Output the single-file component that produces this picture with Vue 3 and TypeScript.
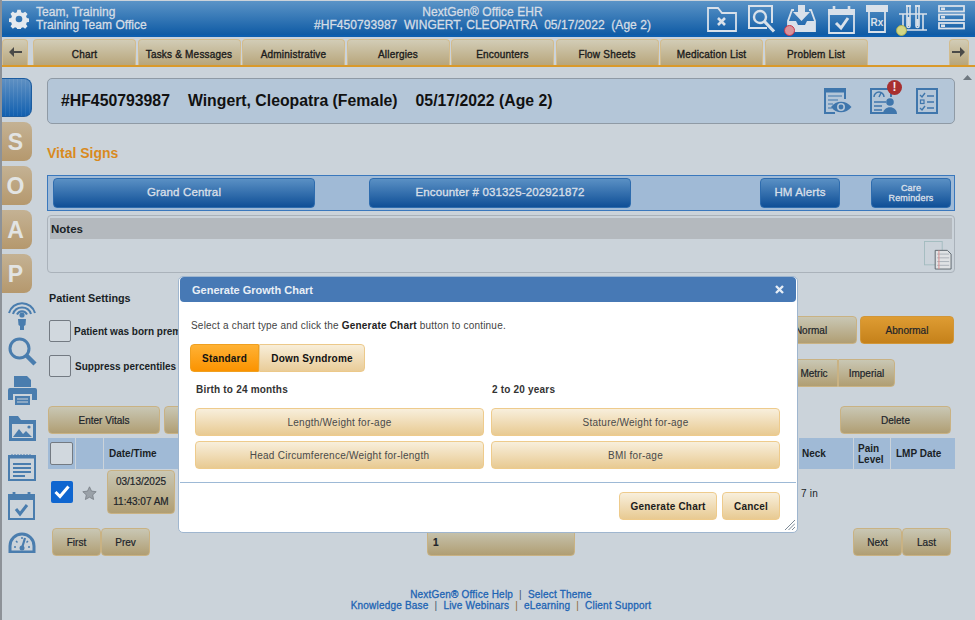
<script setup lang="ts">
const tabs = ['Chart', 'Tasks & Messages', 'Administrative', 'Allergies', 'Encounters', 'Flow Sheets', 'Medication List', 'Problem List']
const soap = ['S', 'O', 'A', 'P']
</script>

<template>
  <div class="page">
    <header class="topbar">
      <div class="who">
        <svg class="gear" width="20" height="20" viewBox="0 0 24 24"><path fill="#e4e9ee" fill-rule="evenodd" d="M10 1h4l.6 3 2.2.9 2.6-1.7 2.8 2.8-1.7 2.6.9 2.2 3 .6v4l-3 .6-.9 2.2 1.7 2.6-2.8 2.8-2.6-1.7-2.2.9-.6 3h-4l-.6-3-2.2-.9-2.6 1.7-2.8-2.8 1.7-2.6-.9-2.2-3-.6v-4l3-.6.9-2.2L1.800 5.800 4.600 3l2.600 1.700L9.400 3.800zM12 8a4 4 0 1 0 0 8 4 4 0 0 0 0-8z"/></svg>
        <div>
          <div>Team, Training</div>
          <div>Training Team Office</div>
        </div>
      </div>
      <div class="ehr">
        <div class="ehr-name">NextGen® Office EHR</div>
        <div class="ehr-patient"><span>#HF450793987</span><span>WINGERT, CLEOPATRA</span><span>05/17/2022</span><span>(Age 2)</span></div>
      </div>
      <div class="top-icons">
        <svg width="30" height="27" viewBox="0 0 30 27" fill="none" stroke="#d9e1ea" stroke-width="1.800"><path d="M1 3h10l4 5h14v18H1z"/><path d="M11 13l7 7m0-7l-7 7" stroke-width="2.600"/></svg>
        <svg width="28" height="28" viewBox="0 0 28 28" fill="none" stroke="#d9e1ea" stroke-width="2"><path d="M19 23H1V1h23v17"/><circle cx="12" cy="12" r="6" stroke-width="2.400"/><path d="M16.500 16.500L26 26.500" stroke-width="3.200"/></svg>
        <span class="icon-wrap">
          <svg width="29" height="27" viewBox="0 0 29 27"><path fill="#d9e1ea" d="M11 0h7v7h5l-8.500 9L6 7h5z"/><path fill="none" stroke="#d9e1ea" stroke-width="1.800" d="M7 5H5L1 16v10h27V16L24 5h-2"/><path fill="#d9e1ea" d="M1 16h8l2 4h7l2-4h8v10H1z"/></svg>
          <i class="dot dot-red"></i>
        </span>
        <svg width="27" height="29" viewBox="0 0 27 29" fill="none" stroke="#d9e1ea" stroke-width="1.800"><path d="M1 5h25v23H1z"/><path fill="#d9e1ea" d="M1 5h25v4H1z"/><path d="M6 1v6m15-6v6" stroke-width="2.600"/><path d="M8 18l5 5 7-10" stroke-width="3"/></svg>
        <svg width="22" height="28" viewBox="0 0 22 28" fill="none" stroke="#d9e1ea" stroke-width="1.800"><path fill="#d9e1ea" d="M0 1h22v5H0z"/><path d="M3 6h16v21H3z"/><text x="11" y="21" text-anchor="middle" font-size="10" font-weight="700" font-family="Liberation Sans" fill="#d9e1ea" stroke="none">Rx</text></svg>
        <span class="icon-wrap">
          <svg width="28" height="28" viewBox="0 0 28 28" fill="none" stroke="#d9e1ea" stroke-width="1.600"><path d="M0 9h28M0 25h28M4 9v16M24 9v16"/><path d="M7 1h5M16 1h5" stroke-width="2"/><path d="M8 1v20a1.500 1.500 0 0 0 3 0V1M17 1v20a1.500 1.500 0 0 0 3 0V1"/><path d="M9.500 12v9M18.500 14v7" stroke-width="2.400"/></svg>
          <i class="dot dot-yellow"></i>
        </span>
        <svg width="27" height="25" viewBox="0 0 27 25" fill="none" stroke="#d9e1ea" stroke-width="1.800"><rect x="1" y="1" width="25" height="5.500"/><rect x="1" y="9.500" width="25" height="5.500"/><rect x="1" y="18" width="25" height="5.500"/><path d="M3 3.800h4M3 12.300h4M3 20.800h4" stroke-width="2.400"/></svg>
      </div>
    </header>

    <nav class="tabbar">
      <button class="tab tab-arrow">
        <svg width="13" height="10" viewBox="0 0 13 10"><path fill="#4a4a48" d="M5 0v4h8v2H5v4L0 5z"/></svg>
      </button>
      <div class="tabs">
        <button v-for="t in tabs" :key="t" class="tab">{{ t }}</button>
      </div>
      <button class="tab tab-arrow tab-next">
        <svg width="13" height="10" viewBox="0 0 13 10"><path fill="#4a4a48" d="M8 0v4H0v2h8v4l5-5z"/></svg>
      </button>
    </nav>

    <div class="body">
      <aside class="side">
        <div class="side-blue"></div>
        <div v-for="s in soap" :key="s" class="side-tab">{{ s }}</div>
        <div class="side-icons">
          <svg width="28" height="30" viewBox="0 0 28 30" fill="none" stroke="#4a7dae" stroke-width="2"><path d="M1 13a13.500 13.500 0 0 1 26 0M5 14a9.500 9.500 0 0 1 18 0M9 14.500a5.500 5.500 0 0 1 10 0"/><circle cx="14" cy="15" r="2.600" fill="#4a7dae" stroke="none"/><path fill="#4a7dae" stroke="none" d="M10 19h8l-.5 6-1.500 1v4h-4v-4l-1.500-1z"/></svg>
          <svg class="ic-search" width="29" height="29" viewBox="0 0 29 29" fill="none" stroke="#4a7dae"><circle cx="11.500" cy="11.500" r="9.500" stroke-width="3"/><path d="M18.500 18.500L27 27" stroke-width="4.500"/></svg>
          <svg class="ic-print" width="29" height="29" viewBox="0 0 29 29"><path fill="#4a7dae" d="M6 0h13l4 4v7H6z"/><path fill="#4a7dae" d="M2 12h25a2 2 0 0 1 2 2v10h-5v-6H5v6H0V14a2 2 0 0 1 2-2z"/><path fill="#4a7dae" d="M7 20h15v9H7z"/><path stroke="#cbd3da" stroke-width="1.200" d="M9 23h11M9 26h11"/></svg>
          <svg class="ic-folder" width="28" height="25" viewBox="0 0 28 25"><path fill="#4a7dae" d="M1 0h9l3 4h15v21H1z"/><path fill="#cbd3da" d="M4 8h21v14H4z"/><path fill="#4a7dae" d="M5 21l6-8 4 5 3-3 6 6z"/><circle cx="21" cy="11" r="1.600" fill="#4a7dae"/></svg>
          <svg class="ic-note" width="28" height="28" viewBox="0 0 28 28" fill="none" stroke="#4a7dae"><rect x="1" y="3" width="26" height="24" stroke-width="2"/><path d="M2 4h24" stroke-width="3"/><path d="M4 1v3m3-3v3m3-3v3m3-3v3m3-3v3m3-3v3m3-3v3" stroke-width="1"/><path d="M5 11h18M5 15h18M5 19h18M5 23h12" stroke-width="2"/></svg>
          <svg class="ic-cal" width="27" height="29" viewBox="0 0 27 29" fill="none" stroke="#4a7dae" stroke-width="2"><rect x="1" y="4" width="25" height="24"/><path fill="#4a7dae" d="M1 4h25v4H1z"/><path d="M6 1v6m15-6v6" stroke-width="2.800"/><path d="M8 18l4 5 7-9" stroke-width="3"/></svg>
          <svg class="ic-gauge" width="28" height="21" viewBox="0 0 28 21"><path fill="none" stroke="#4a7dae" stroke-width="3" d="M2 20v-6a12 12 0 0 1 24 0v6z"/><path stroke="#4a7dae" stroke-width="2.200" d="M14 16l3-10"/><circle cx="14" cy="16" r="2.500" fill="#4a7dae"/><path stroke="#4a7dae" stroke-width="1.500" d="M6 15h2M8 9l1.500 1.500M14 5v2M20 9l-1.500 1.500M20 15h2"/></svg>
        </div>
      </aside>

      <main class="main">
        <section class="banner">
          <div class="banner-text"><span>#HF450793987</span><span>Wingert, Cleopatra (Female)</span><span>05/17/2022 (Age 2)</span></div>
          <div class="banner-icons">
            <svg width="28" height="27" viewBox="0 0 28 27" fill="none" stroke="#3f76ac"><path stroke-width="2" d="M11 25H1V1h20v10"/><path fill="#3f76ac" d="M1 1h20v3H1z"/><path stroke-width="1.200" d="M4 8h14M4 12h10M4 16h5M4 20h4"/><path fill="#3f76ac" stroke="none" d="M7 19c5-7 15-7 20.500 0-5.500 7-15.500 7-20.500 0z"/><circle cx="17" cy="19" r="4" fill="#b4c6d8" stroke="none"/><circle cx="17" cy="19" r="2.400" fill="#3f76ac" stroke="none"/></svg>
            <span class="alert-wrap">
              <svg width="28" height="27" viewBox="0 0 28 27" fill="none" stroke="#3f76ac"><path stroke-width="2" d="M14 25H1V1h20v8"/><path stroke-width="1.500" d="M4 9a5 5 0 0 1 10 0M9 9l2-4M4 14h12M4 18h8M4 22h8"/><circle cx="20" cy="14" r="3.800" fill="#3f76ac" stroke="none"/><path fill="#3f76ac" stroke="none" d="M13 26c0-9 14-9 14 0z"/></svg>
              <b class="alert">!</b>
            </span>
            <svg width="22" height="26" viewBox="0 0 22 26" fill="none" stroke="#3f76ac"><rect x="1" y="1" width="20" height="24" stroke-width="2"/><path stroke-width="1.400" d="M4 7l2 2 3-4M4 20l2 2 3-4M11 8h7M11 14h7M11 20h7"/><rect x="4.500" y="12" width="3.500" height="3.500" stroke-width="1.200"/></svg>
          </div>
        </section>

        <h1 class="title">Vital Signs</h1>

        <div class="blue-bar">
          <button class="blue-btn wide">Grand Central</button>
          <button class="blue-btn wide enc">Encounter # 031325-202921872</button>
          <button class="blue-btn short hm">HM Alerts</button>
          <button class="blue-btn short care">Care<br>Reminders</button>
        </div>

        <section class="notes">
          <div class="notes-head">Notes</div>
          <div class="notes-body">
            <svg width="28" height="29" viewBox="0 0 30 31"><rect x=".5" y=".5" width="19" height="25" fill="none" stroke="#a3bcbf"/><path d="M12 10h13l4 4v16H12z" fill="#dfe2e4" stroke="#59636a"/><path d="M14 14h13M14 18h13M14 22h13M14 26h13" stroke="#9aa4ac" stroke-width=".8"/><path d="M16 10v20" stroke="#d98c8c"/></svg>
          </div>
        </section>

        <h2 class="settings">Patient Settings</h2>

        <div class="set-row">
          <label class="check-row"><span class="box"></span>Patient was born prem</label>
          <div class="group">
            <button class="tan normal">Normal</button>
            <button class="tan abnormal">Abnormal</button>
          </div>
        </div>
        <div class="set-row second">
          <label class="check-row"><span class="box"></span>Suppress percentiles f</label>
          <div class="group units">
            <button class="tan metric">Metric</button>
            <button class="tan imperial">Imperial</button>
          </div>
        </div>

        <div class="actions">
          <button class="tan big">Enter Vitals</button>
          <button class="tan big"></button>
          <button class="tan big delete">Delete</button>
        </div>

        <div class="thead">
          <div class="th th-check"><span class="box"></span></div>
          <div class="th th-star"></div>
          <div class="th th-date">Date/Time</div>
          <div class="th th-fill"></div>
          <div class="th th-neck">Neck</div>
          <div class="th th-pain">Pain<br>Level</div>
          <div class="th th-lmp">LMP Date</div>
        </div>
        <div class="trow">
          <span class="checked">
            <svg width="16" height="14" viewBox="0 0 16 14" fill="none" stroke="#fff" stroke-width="3"><path d="M1.500 7l4.500 4.500L14.500 1.500"/></svg>
          </span>
          <svg class="star" width="15" height="14" viewBox="0 0 15 14"><path fill="#9aa1a8" stroke="#777e85" stroke-width=".8" d="M7.500.8l2 4.300 4.700.6-3.500 3.200.9 4.600-4.100-2.300-4.100 2.300.9-4.600L.8 5.700l4.700-.6z"/></svg>
          <button class="tan date">03/13/2025<br>11:43:07 AM</button>
          <span class="neck-val">7 in</span>
        </div>

        <div class="pager">
          <div class="pair">
            <button class="tan pg">First</button>
            <button class="tan pg">Prev</button>
          </div>
          <div class="tan page-num">1</div>
          <div class="pair">
            <button class="tan pg">Next</button>
            <button class="tan pg">Last</button>
          </div>
        </div>

        <footer class="links">
          <div><a>NextGen® Office Help</a><i>|</i><a>Select Theme</a></div>
          <div><a>Knowledge Base</a><i>|</i><a>Live Webinars</a><i class="orange">|</i><a>eLearning</a><i class="orange">|</i><a>Client Support</a></div>
        </footer>
      </main>
    </div>

    <svg class="scroll-up" width="9" height="5" viewBox="0 0 9 5"><path fill="#6f7880" d="M4.500 0L9 5H0z"/></svg>

    <div class="modal">
      <div class="modal-head">
        <span>Generate Growth Chart</span>
        <svg width="9" height="9" viewBox="0 0 9 9" stroke="#e6edf5" stroke-width="2.400"><path d="M1 1l7 7M8 1L1 8"/></svg>
      </div>
      <p class="modal-intro">Select a chart type and click the <b>Generate Chart</b> button to continue.</p>
      <div class="toggle">
        <button class="tog on">Standard</button>
        <button class="tog">Down Syndrome</button>
      </div>
      <div class="chart-grid">
        <div class="col-title">Birth to 24 months</div>
        <div class="col-title">2 to 20 years</div>
        <button class="chart-btn">Length/Weight for-age</button>
        <button class="chart-btn">Stature/Weight for-age</button>
        <button class="chart-btn">Head Circumference/Weight for-length</button>
        <button class="chart-btn">BMI for-age</button>
      </div>
      <div class="modal-foot">
        <button class="chart-btn foot gen">Generate Chart</button>
        <button class="chart-btn foot cancel">Cancel</button>
      </div>
      <svg class="grip" width="11" height="11" viewBox="0 0 11 11" stroke="#7d8a96"><path d="M1 11L11 1M4.500 11L11 4.500M8 11l3-3"/></svg>
    </div>
  </div>
</template>

<style scoped>
.page {
  position: relative;
  width: 975px;
  height: 620px;
  overflow: hidden;
  box-sizing: border-box;
  border-left: 2px solid #8d9298;
  background: #cbd3da;
  font-family: "Liberation Sans", Arial, sans-serif;
  color: #1a1f26;
}

button {
  font-family: inherit;
  margin: 0;
  padding: 0;
  cursor: pointer;
}

.topbar {
  display: flex;
  align-items: flex-start;
  height: 34px;
  margin-top: 1px;
  background: linear-gradient(180deg, #5b94c7, #0f5ba5);
  border-bottom: 2px solid #0d5fb0;
  color: #d5dde6;
  font-size: 12px;
  line-height: 13px;
  letter-spacing: 0.05px;
  -webkit-text-stroke: 0.3px #d5dde6;
}

.who {
  display: flex;
  gap: 7px;
  box-sizing: border-box;
  width: 270px;
  padding: 5px 0 0 7px;
}

.gear {
  margin-top: 3px;
}

.ehr {
  width: 337px;
  margin-left: 42px;
  padding-top: 5px;
  text-align: center;
}

.ehr-patient {
  display: flex;
  justify-content: space-between;
}

.top-icons {
  display: flex;
  align-items: flex-start;
  gap: 11.2px;
  margin-left: 56px;
  padding-top: 4px;
}

.top-icons svg {
  display: block;
}

.icon-wrap {
  position: relative;
  display: block;
}

.dot {
  position: absolute;
  left: -3px;
  top: 20px;
  width: 9px;
  height: 9px;
  border-radius: 50%;
  border: 1px solid #c9354a;
  background: #d9929a;
}

.dot-yellow {
  border-color: #a8ae52;
  background: #d2d684;
}

.tabbar {
  display: flex;
  height: 26px;
  margin-top: 2px;
  border-bottom: 2px solid #d9992a;
}

.tab {
  width: 103px;
  height: 26px;
  padding-top: 3px;
  border: 1px solid #d3bc8d;
  border-bottom: 0;
  border-radius: 4px 4px 0 0;
  background: linear-gradient(180deg, #d2ccb6, #b8a67b);
  color: #1c1c1c;
  font-size: 10px;
  letter-spacing: 0.2px;
  -webkit-text-stroke: 0.35px #1c1c1c;
}

.tab-arrow {
  width: 26px;
  flex: none;
  padding-top: 0;
}

.tabs {
  display: flex;
  gap: 1.5px;
  margin-left: 5px;
}

.tab-next {
  margin-left: 81px;
  width: 20px;
}

.body {
  display: flex;
  margin-top: 11px;
}

.side {
  flex: none;
  width: 45px;
}

.side-blue {
  width: 30px;
  height: 39px;
  border-radius: 0 8px 8px 0;
  border: 1px solid #1c5c9f;
  border-left: 0;
  box-sizing: border-box;
  background:
    repeating-linear-gradient(90deg, transparent 0 3px, rgba(255, 255, 255, 0.07) 3px 4px),
    linear-gradient(180deg, #5f90c2, #1160b0);
}

.side-tab {
  width: 30px;
  height: 39px;
  margin-top: 5px;
  border-radius: 0 8px 8px 0;
  background: linear-gradient(180deg, #c4b294, #b5986d);
  color: #e2e4e3;
  font-size: 23px;
  font-weight: 700;
  line-height: 40px;
  text-align: center;
  padding-right: 3px;
  box-sizing: border-box;
}

.side-icons {
  display: flex;
  flex-direction: column;
  align-items: flex-start;
  margin: 7px 0 0 6px;
}

.side-icons svg {
  display: block;
}

.ic-search { margin-top: 7px; }
.ic-print { margin-top: 10px; }
.ic-folder { margin-top: 11px; }
.ic-note { margin-top: 12px; }
.ic-cal { margin-top: 10px; }
.ic-gauge { margin-top: 12px; }

.main {
  width: 908px;
}

.banner {
  display: flex;
  align-items: center;
  justify-content: space-between;
  box-sizing: border-box;
  height: 46px;
  padding: 0 16px 0 13px;
  background: #b4c6d8;
  border: 1px solid #8f9aa5;
  border-radius: 5px;
}

.banner-text {
  display: flex;
  gap: 18px;
  font-size: 15.8px;
  font-weight: 700;
  color: #111;
}

.banner-icons {
  display: flex;
  align-items: center;
  gap: 18px;
}

.banner-icons svg {
  display: block;
}

.alert-wrap {
  position: relative;
}

.alert {
  position: absolute;
  left: 17px;
  top: -8px;
  width: 15px;
  height: 15px;
  border-radius: 50%;
  background: #a83030;
  color: #f4e8e8;
  font-size: 12px;
  line-height: 15px;
  text-align: center;
}

.title {
  margin: 21px 0 0;
  color: #d98a1e;
  font-size: 14px;
  font-weight: 700;
  line-height: 17px;
}

.blue-bar {
  display: flex;
  align-items: center;
  box-sizing: border-box;
  height: 36px;
  margin-top: 13px;
  padding: 0 3px 0 5px;
  background: #a0bad6;
  border: 1px solid #3a78bd;
}

.blue-btn {
  flex: none;
  height: 30px;
  padding-bottom: 2px;
  border: 1px solid #2e6cae;
  border-radius: 4px;
  background: linear-gradient(180deg, #5a90c4, #0f4f97);
  color: #d7dfe8;
  letter-spacing: 0.15px;
  -webkit-text-stroke: 0.35px #d7dfe8;
}

.wide {
  width: 262px;
  font-size: 11.5px;
}

.enc { margin-left: 54px; }

.short {
  width: 80px;
  font-size: 11.5px;
}

.hm { margin-left: 129px; }

.care {
  margin-left: 31px;
  font-size: 9px;
  line-height: 10px;
  padding-bottom: 0;
}

.notes {
  box-sizing: border-box;
  height: 58px;
  margin-top: 4px;
  padding: 2px;
  border: 1px solid #aab2ba;
  border-radius: 4px;
}

.notes-head {
  height: 21px;
  padding-left: 1px;
  background: #b4b9be;
  font-size: 11.5px;
  font-weight: 700;
  line-height: 22px;
}

.notes-body {
  display: flex;
  justify-content: flex-end;
  padding: 2px 0 0;
}

.settings {
  margin: 19px 0 0 2px;
  font-size: 10.8px;
  font-weight: 700;
  line-height: 13px;
}

.set-row {
  display: flex;
  justify-content: space-between;
  align-items: center;
  height: 28px;
  margin-top: 11px;
  padding-left: 2px;
}

.set-row.second {
  align-items: flex-start;
  height: 32px;
}

.check-row {
  display: flex;
  align-items: center;
  gap: 3px;
  padding-top: 2px;
  font-size: 10px;
  font-weight: 700;
  white-space: nowrap;
}

.second .check-row {
  gap: 4px;
  padding-top: 0;
}

.box {
  display: block;
  width: 20px;
  height: 20px;
  border: 1px solid #737a82;
  border-radius: 2px;
  background: #d1d8de;
}

.group {
  display: flex;
  gap: 3px;
  margin-right: 1px;
}

.units {
  gap: 0;
  margin: 4px 60px 0 0;
}

.tan {
  height: 28px;
  border: 1px solid #c9b283;
  border-radius: 4px;
  background: linear-gradient(180deg, #c9c7b4, #b09e73);
  color: #20242a;
  font-size: 10px;
  -webkit-text-stroke: 0.2px #20242a;
}

.normal { width: 92px; }

.abnormal {
  width: 94px;
  background: linear-gradient(180deg, #de9c33, #c5811a);
  border-color: #d29637;
}

.metric { width: 48px; border-radius: 4px 0 0 4px; }
.imperial { width: 57px; border-radius: 0 4px 4px 0; }

.actions {
  display: flex;
  gap: 4px;
  margin: 19px 0 0 1px;
}

.big { width: 112px; }

.delete {
  width: 111px;
  margin-left: auto;
  margin-right: 4px;
}

.thead {
  display: flex;
  height: 31px;
  margin: 4px 0 0 1px;
  gap: 1px;
  font-size: 10px;
  font-weight: 700;
}

.th {
  display: flex;
  align-items: center;
  box-sizing: border-box;
  background: #a0bad6;
  line-height: 11px;
}

.th-check { width: 27px; justify-content: center; }
.th-star { width: 27px; }
.th-date { width: 90px; padding-left: 5px; }
.th-fill { flex: 1; }
.th-neck { width: 54px; padding-left: 3px; }
.th-pain { width: 36px; padding-left: 4px; }
.th-lmp { width: 64px; padding-left: 5px; }

.th-check .box {
  width: 21px;
  height: 21px;
}

.trow {
  position: relative;
  display: flex;
  align-items: center;
  height: 45px;
  padding-left: 4px;
}

.checked {
  display: flex;
  align-items: center;
  justify-content: center;
  width: 22px;
  height: 22px;
  border-radius: 2px;
  background: #0f66d0;
}

.star { margin: 2px 0 0 9px; }

.date {
  width: 68px;
  height: 44px;
  margin-left: 10px;
  line-height: 20px;
}

.neck-val {
  position: absolute;
  left: 754px;
  top: 19px;
  font-size: 10px;
  letter-spacing: 0.2px;
}

.pager {
  display: flex;
  justify-content: space-between;
  align-items: flex-start;
  margin-top: 14px;
  padding: 0 4px 0 5px;
}

.pair {
  display: flex;
}

.pg { width: 49px; }

.page-num {
  width: 148px;
  margin-left: -1px;
  box-sizing: border-box;
  padding-left: 5px;
  font-weight: 700;
  line-height: 28px;
}

.links {
  margin-top: 33px;
  text-align: center;
  color: #1d64b4;
  font-size: 10px;
  line-height: 11px;
  letter-spacing: 0.2px;
  -webkit-text-stroke: 0.3px #1d64b4;
}

.links i {
  font-style: normal;
  color: #43566a;
  margin: 0 6px;
  -webkit-text-stroke: 0;
}

.links i.orange {
  color: #8c6a3c;
}

.scroll-up {
  position: absolute;
  left: 960.5px;
  top: 75px;
}

.modal {
  position: absolute;
  left: 176px;
  top: 276px;
  box-sizing: border-box;
  width: 620px;
  height: 257px;
  padding: 0 1px;
  background: #fff;
  border: 1px solid #9fb6cf;
  border-radius: 5px;
  color: #444;
}

.modal-head {
  display: flex;
  align-items: center;
  justify-content: space-between;
  height: 25px;
  padding: 0 12px;
  background: #4779b5;
  border-radius: 4px;
  color: #e9eff6;
  font-size: 11px;
  font-weight: 700;
}

.modal-intro {
  margin: 18px 0 0 11px;
  font-size: 10px;
  line-height: 12px;
  letter-spacing: 0.2px;
}

.modal-intro b {
  color: #222;
}

.toggle {
  display: flex;
  margin: 12px 0 0 10px;
}

.tog {
  width: 106px;
  height: 28px;
  border: 1px solid #ecc98a;
  border-radius: 0 4px 4px 0;
  background: linear-gradient(180deg, #f8eed9, #e9cc98);
  color: #111;
  font-size: 10px;
  font-weight: 700;
  letter-spacing: 0.2px;
}

.tog.on {
  width: 69px;
  border-color: #f0a020;
  border-radius: 4px 0 0 4px;
  background: linear-gradient(180deg, #ffb235, #fb9300);
}

.chart-grid {
  display: grid;
  grid-template-columns: 289px 289px;
  column-gap: 7px;
  margin: 11px 0 0 15px;
}

.col-title {
  height: 25px;
  padding-left: 1px;
  font-size: 10px;
  font-weight: 700;
  line-height: 13px;
  letter-spacing: 0.2px;
  color: #333;
}

.chart-btn {
  height: 28px;
  margin-bottom: 5px;
  border: 1px solid #eecb8c;
  border-radius: 4px;
  background: linear-gradient(180deg, #f8efdc, #e8ca92);
  color: #4a4a4a;
  font-size: 10px;
  letter-spacing: 0.25px;
}

.modal-foot {
  display: flex;
  justify-content: flex-end;
  gap: 5px;
  margin-top: 8px;
  padding: 9px 16px 0 0;
  border-top: 1px solid #9db9d6;
}

.foot {
  margin: 0;
  color: #1c1c1c;
  font-weight: 700;
  letter-spacing: 0.2px;
}

.gen { width: 98px; }
.cancel { width: 58px; }

.grip {
  position: absolute;
  right: 2px;
  bottom: 2px;
}
</style>
